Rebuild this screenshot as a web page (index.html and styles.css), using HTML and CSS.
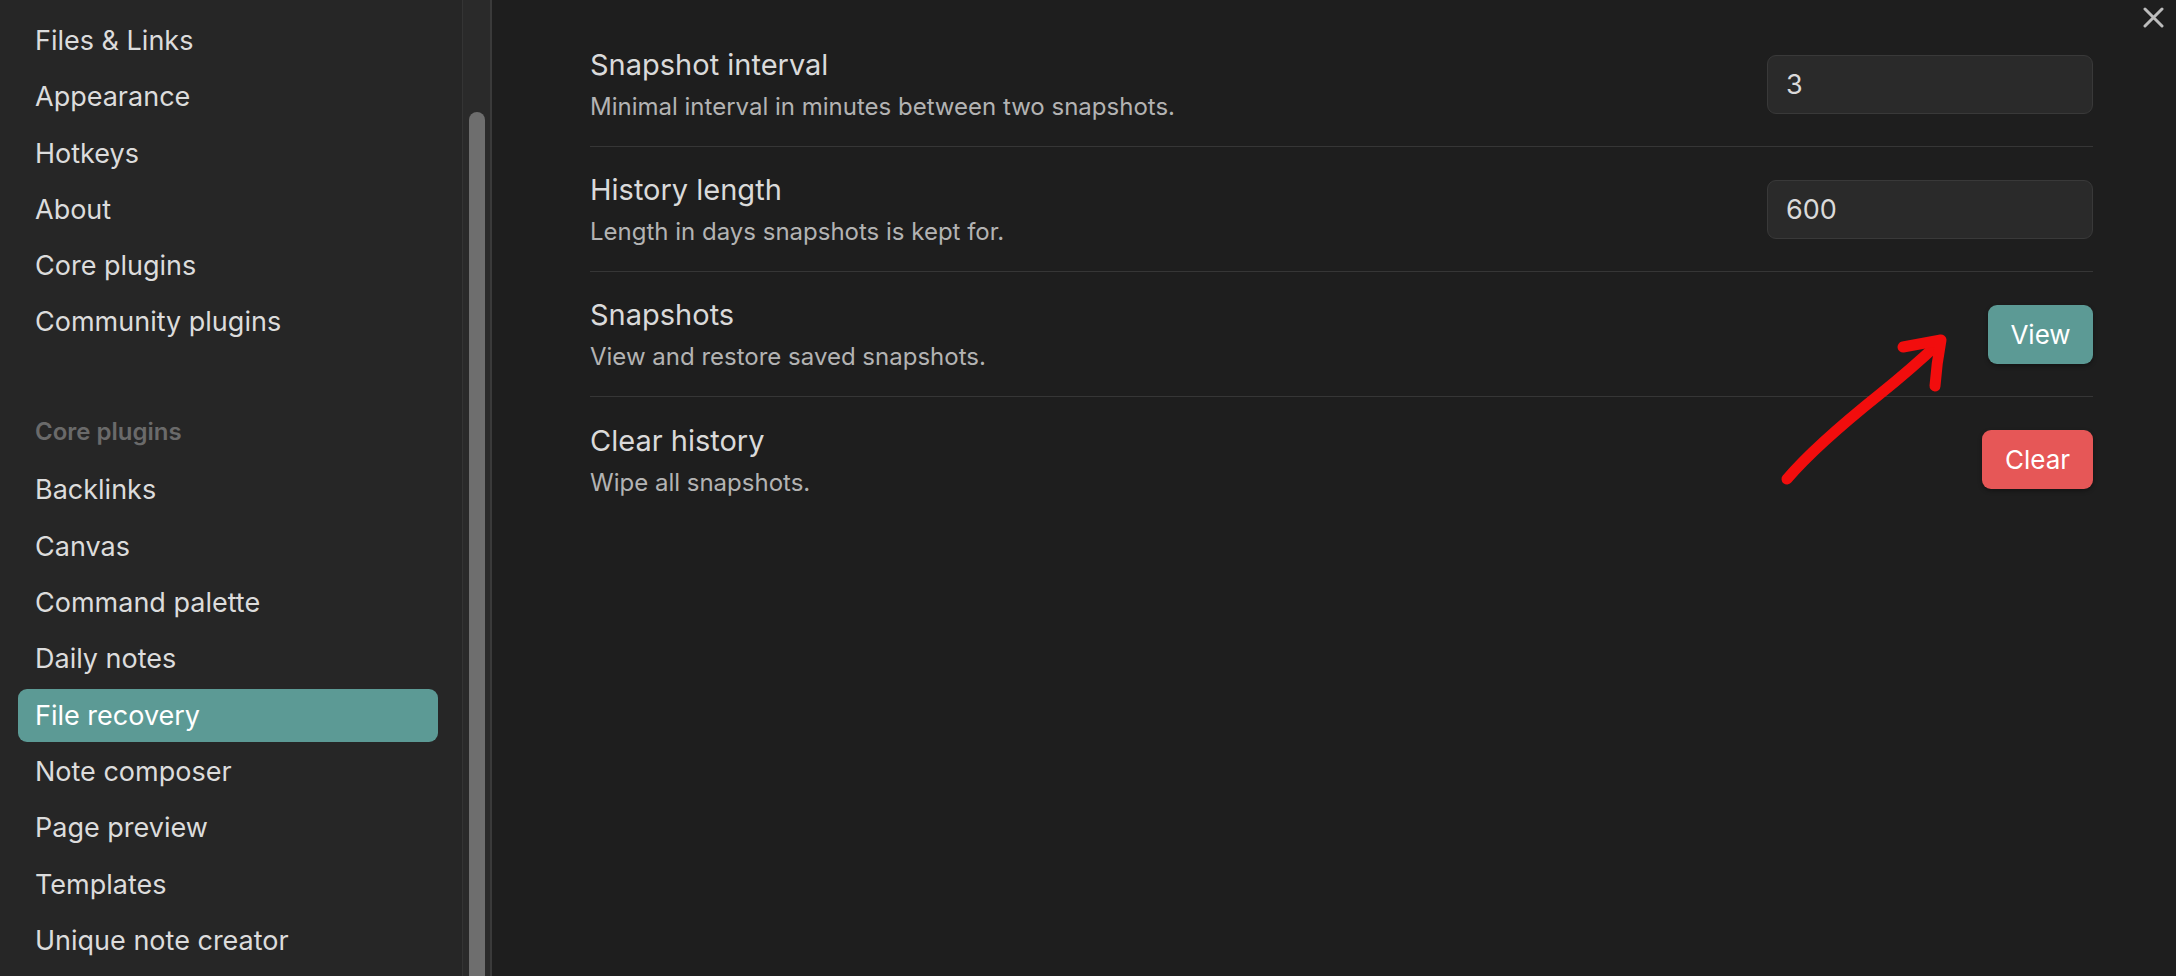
FILE: index.html
```html
<!DOCTYPE html>
<html lang="en">
<head>
  <meta charset="UTF-8" />
  <title>Settings – File recovery</title>
  <link rel="stylesheet" href="styles.css">
</head>
<body>
  <div class="modal">
    <nav class="sidebar">
      <div class="nav-item">Files &amp; Links</div>
      <div class="nav-item">Appearance</div>
      <div class="nav-item">Hotkeys</div>
      <div class="nav-item">About</div>
      <div class="nav-item">Core plugins</div>
      <div class="nav-item">Community plugins</div>

      <div class="nav-header">Core plugins</div>
      <div class="nav-item">Backlinks</div>
      <div class="nav-item">Canvas</div>
      <div class="nav-item">Command palette</div>
      <div class="nav-item">Daily notes</div>
      <div class="nav-item active">File recovery</div>
      <div class="nav-item">Note composer</div>
      <div class="nav-item">Page preview</div>
      <div class="nav-item">Templates</div>
      <div class="nav-item">Unique note creator</div>
    </nav>

    <div class="scroll-track">
      <div class="scroll-thumb"></div>
    </div>

    <main class="content">
      <button class="close-btn" aria-label="Close">
        <svg width="21" height="21" viewBox="0 0 21 21">
          <path d="M2 2 L19 19 M19 2 L2 19" stroke="#bcbcbc" stroke-width="3" stroke-linecap="round" fill="none"/>
        </svg>
      </button>

      <div class="setting">
        <div class="setting-info">
          <div class="setting-name">Snapshot interval</div>
          <div class="setting-desc">Minimal interval in minutes between two snapshots.</div>
        </div>
        <input class="setting-input" type="text" value="3" />
      </div>

      <div class="setting">
        <div class="setting-info">
          <div class="setting-name">History length</div>
          <div class="setting-desc">Length in days snapshots is kept for.</div>
        </div>
        <input class="setting-input" type="text" value="600" />
      </div>

      <div class="setting">
        <div class="setting-info">
          <div class="setting-name">Snapshots</div>
          <div class="setting-desc">View and restore saved snapshots.</div>
        </div>
        <button class="btn btn-view">View</button>
      </div>

      <div class="setting last">
        <div class="setting-info">
          <div class="setting-name">Clear history</div>
          <div class="setting-desc">Wipe all snapshots.</div>
        </div>
        <button class="btn btn-clear">Clear</button>
      </div>
    </main>
  </div>

  <!-- hand-drawn annotation arrow -->
  <svg class="annotation" width="2176" height="976" viewBox="0 0 2176 976">
    <path d="M1787 479 C1810 452 1850 418 1880 394 C1905 374 1925 356 1940 342" stroke="#f20d0d" stroke-width="11" stroke-linecap="round" fill="none"/>
    <path d="M1903 347 L1941 340 C1938 356 1936 372 1935 386" stroke="#f20d0d" stroke-width="11" stroke-linecap="round" stroke-linejoin="round" fill="none"/>
  </svg>
</body>
</html>
```

FILE: styles.css
```css
* {
  box-sizing: border-box;
}
body {
  margin: 0;
  font-family: Inter, "Noto Sans", sans-serif;
  background-color: #1e1e1e;
  color: #dadada;
  overflow: hidden;
}
.modal {
  display: flex;
  height: 976px;
}
.sidebar {
  width: 462px;
  background-color: #262626;
  padding-top: 14px;
  overflow: hidden;
}
.nav-item {
  height: 53px;
  margin: 0 24px 3.3px 18px;
  padding-left: 17px;
  display: flex;
  align-items: center;
  font-size: 27px;
  color: #dcdcdc;
  border-radius: 9px;
}
.nav-item.active {
  background-color: #5c9a95;
  color: #ffffff;
}
.nav-header {
  height: 40px;
  margin: 63px 0 12px 35px;
  display: flex;
  align-items: center;
  font-size: 24px;
  font-weight: 600;
  color: #6a6a6a;
}
.scroll-track {
  width: 30px;
  background-color: #2a2a2a;
  border-left: 1px solid #343434;
  border-right: 2px solid #3a3a3a;
  padding: 112px 5px 0 6px;
  display: flex;
}
.scroll-thumb {
  flex: 1;
  background-color: #6e6e6e;
  border-radius: 8px 8px 0 0;
}
.content {
  flex: 1;
  position: relative;
  padding: 22px 83px 0 98px;
}
.close-btn {
  position: absolute;
  top: 7px;
  right: 12px;
  width: 21px;
  height: 21px;
  padding: 0;
  border: none;
  background: none;
}
.close-btn svg {
  display: block;
}
.setting {
  height: 125px;
  display: flex;
  align-items: center;
  justify-content: space-between;
  border-bottom: 1px solid #363636;
}
.setting.last {
  border-bottom: none;
}
.setting-name {
  font-size: 29px;
  line-height: 40px;
  color: #dadada;
}
.setting-desc {
  margin-top: 6px;
  font-size: 24px;
  line-height: 32px;
  color: #b3b3b3;
}
.setting-input {
  width: 326px;
  height: 59px;
  background-color: #2a2a2a;
  border: 1px solid #393939;
  border-radius: 9px;
  padding: 0 18px;
  font-family: inherit;
  font-size: 27px;
  color: #dadada;
}
.btn {
  height: 59px;
  border: none;
  border-radius: 9px;
  font-family: inherit;
  font-size: 26px;
  color: #ffffff;
  box-shadow: 0 2px 4px rgba(0, 0, 0, 0.35);
}
.btn-view {
  width: 105px;
  background-color: #5c9a95;
}
.btn-clear {
  width: 111px;
  background-color: #e65757;
}
.annotation {
  position: fixed;
  top: 0;
  left: 0;
  pointer-events: none;
}
```
